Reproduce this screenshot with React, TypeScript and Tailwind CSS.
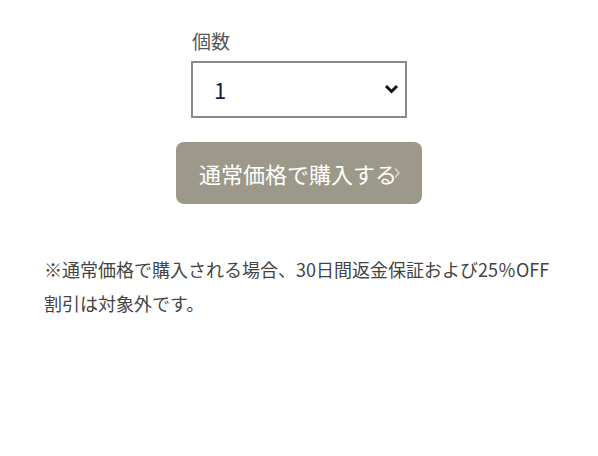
export default function App() {
  return (
    <div
      className="w-[598px] h-[456px] bg-white text-[#444]"
      style={{ fontFamily: '"Noto Sans CJK JP", "Noto Sans", sans-serif' }}
    >
      <div className="flex flex-col items-center pt-[27px]">
        <div className="w-[216px]">
          <label className="block pl-[1px] text-[19px] leading-[28px] text-[#555]">個数</label>
          <div className="relative mt-[6px]">
            <select className="block w-[216px] h-[57px] appearance-none border-2 border-[#8a8a8a] bg-white pl-[21px] text-[22px] text-[#1a1a3a] outline-none">
              <option>1</option>
              <option>2</option>
              <option>3</option>
            </select>
            <svg
              className="pointer-events-none absolute right-[8px] top-[22px]"
              width="15"
              height="12"
              viewBox="0 0 15 12"
            >
              <path d="M2 3 L7.5 8.5 L13 3" fill="none" stroke="#111" strokeWidth="3" />
            </svg>
          </div>
        </div>
        <button className="relative mt-[24px] flex h-[62px] w-[246px] items-center justify-center rounded-[8px] bg-[#9c998a] text-[22px] text-white">
          <span className="pr-[2px]">通常価格で購入する</span>
          <svg
            className="absolute right-[21px] top-[25px]"
            width="8"
            height="12"
            viewBox="0 0 8 12"
          >
            <path d="M2 1.5 L6 6 L2 10.5" fill="none" stroke="#d8d6cc" strokeWidth="1.5" />
          </svg>
        </button>
      </div>
      <p className="mt-[48px] px-[44px] text-[18px] leading-[34px] text-[#444]">
        ※通常価格で購入される場合、30日間返金保証および25％OFF割引は対象外です。
      </p>
    </div>
  );
}
